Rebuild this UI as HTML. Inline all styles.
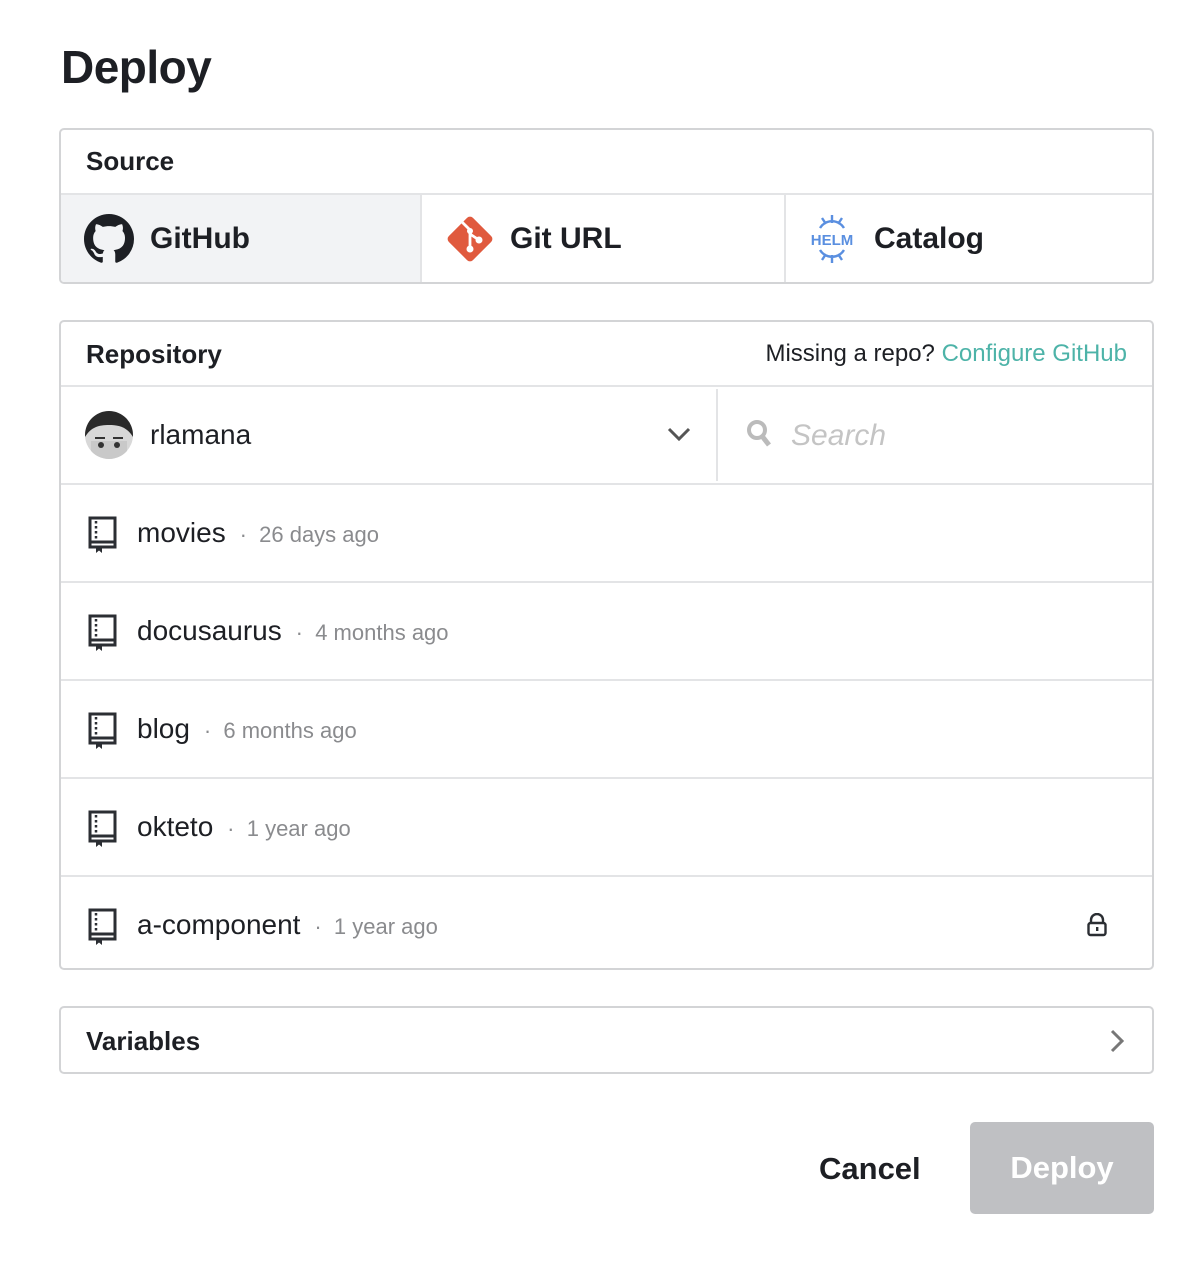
<!DOCTYPE html>
<html><head><meta charset="utf-8"><style>
*{box-sizing:border-box;margin:0;padding:0}
body{width:1204px;height:1268px;background:#fff;font-family:"Liberation Sans",sans-serif;color:#1d1f24;position:relative;overflow:hidden}
.abs{position:absolute}
.box{position:absolute;left:59px;width:1095px;border:2px solid #d3d4d6;border-radius:5px;overflow:hidden}
.h{font-weight:bold;font-size:26px}
.div{position:absolute;background:#e3e4e6}
.row{position:absolute;left:0;width:100%;height:98px;border-top:2px solid #e3e4e6}
.name{position:absolute;left:76px;top:32px;font-size:28px}
.time{font-size:22px;color:#8a8b8e}
.book{position:absolute;left:27px;top:31px}
</style></head><body>
<div class="abs" style="left:61px;top:40px;font-size:46px;font-weight:bold;letter-spacing:-0.5px">Deploy</div>

<div class="box" style="top:128px;height:156px">
  <div class="abs h" style="left:25px;top:16px">Source</div>
  <div class="div" style="left:0;top:63px;width:100%;height:2px"></div>
  <div class="abs" style="left:0;top:65px;width:359px;height:89px;background:#f2f3f5"></div>
  <div class="div" style="left:359px;top:65px;width:2px;height:89px"></div>
  <div class="div" style="left:723px;top:65px;width:2px;height:89px"></div>
  <svg class="abs" style="left:23px;top:84px" width="50" height="50" viewBox="0 0 16 16"><path fill="#1d1f24" d="M8 0C3.58 0 0 3.58 0 8c0 3.54 2.29 6.53 5.47 7.59.4.07.55-.17.55-.38 0-.19-.01-.82-.01-1.49-2.01.37-2.53-.49-2.69-.94-.09-.23-.48-.94-.82-1.13-.28-.15-.68-.52-.01-.53.63-.01 1.08.58 1.23.82.72 1.21 1.87.87 2.33.66.07-.52.28-.87.51-1.07-1.78-.2-3.64-.89-3.64-3.95 0-.87.31-1.59.82-2.15-.08-.2-.36-1.02.08-2.12 0 0 .67-.21 2.2.82.64-.18 1.32-.27 2-.27.68 0 1.36.09 2 .27 1.53-1.04 2.2-.82 2.2-.82.44 1.1.16 1.92.08 2.12.51.56.82 1.27.82 2.15 0 3.07-1.87 3.75-3.65 3.95.29.25.54.73.54 1.48 0 1.07-.01 1.93-.01 2.2 0 .21.15.46.55.38A8.013 8.013 0 0016 8c0-4.42-3.58-8-8-8z"/></svg>
  <div class="abs" style="left:89px;top:92px;font-size:30px;font-weight:bold">GitHub</div>
  <svg class="abs" style="left:383px;top:83px" width="52" height="52" viewBox="0 0 52 52"><rect x="9" y="9" width="34" height="34" rx="4" transform="rotate(45 26 26)" fill="#e05a3e"/><path d="M18 9l8 8v18M26 21l9 6" stroke="#fff" stroke-width="2.8" fill="none"/><circle cx="26" cy="36" r="3.5" fill="#fff"/><circle cx="35" cy="27" r="3.5" fill="#fff"/><circle cx="26" cy="18" r="3" fill="#fff"/></svg>
  <div class="abs" style="left:449px;top:92px;font-size:30px;font-weight:bold">Git URL</div>
  <svg class="abs" style="left:745px;top:84px" width="52" height="50" viewBox="0 0 52 50"><g stroke="#5a8fe0" stroke-width="2.4" fill="none"><path d="M14 14a14 14 0 0 1 24 0M14 36a14 14 0 0 0 24 0M26 1v8M16 4l4 6M36 4l-4 6M26 49v-8M16 46l4-6M36 46l-4-6"/></g><text x="26" y="31" text-anchor="middle" font-family="Liberation Sans" font-weight="bold" font-size="15" fill="#5a8fe0">HELM</text></svg>
  <div class="abs" style="left:813px;top:92px;font-size:30px;font-weight:bold">Catalog</div>
</div>

<div class="box" style="top:320px;height:650px">
  <div class="abs h" style="left:25px;top:17px">Repository</div>
  <div class="abs" style="right:25px;top:18px;font-size:24px">Missing a repo? <span style="color:#4db3a8">Configure GitHub</span></div>
  <div class="div" style="left:0;top:63px;width:100%;height:2px"></div>
  <svg class="abs" style="left:24px;top:89px" width="48" height="48" viewBox="0 0 48 48"><defs><clipPath id="c"><circle cx="24" cy="24" r="24"/></clipPath></defs><g clip-path="url(#c)"><rect width="48" height="48" fill="#d8d8d8"/><path d="M0 0h48v26c-6-10-14-12-24-12S6 16 0 26z" fill="#2a2a2a"/><path d="M6 30h36v18H6z" fill="#c9c9c9"/><circle cx="16" cy="34" r="3" fill="#333"/><circle cx="32" cy="34" r="3" fill="#333"/><path d="M10 27h10M28 27h10" stroke="#333" stroke-width="2"/></g></svg>
  <div class="abs" style="left:89px;top:97px;font-size:28px">rlamana</div>
  <svg class="abs" style="left:606px;top:104px" width="24" height="16" viewBox="0 0 24 16"><path d="M2 3l10 10L22 3" stroke="#555" stroke-width="3" fill="none"/></svg>
  <div class="div" style="left:655px;top:67px;width:2px;height:92px"></div>
  <svg class="abs" style="left:685px;top:97px" width="28" height="30" viewBox="0 0 28 30"><circle cx="11" cy="11" r="8" stroke="#bbb" stroke-width="4" fill="none"/><path d="M16 17l7 9" stroke="#bbb" stroke-width="5"/></svg>
  <div class="abs" style="left:730px;top:97px;font-size:30px;color:#c4c4c4;font-style:italic">Search</div>

  <div class="row" style="top:161px"><svg class="book" width="30" height="38" viewBox="0 0 30 38"><path d="M2 2h25v29H2zM2 26h25" stroke="#2b2e33" stroke-width="3" fill="none"/><path d="M8 5v18" stroke="#2b2e33" stroke-width="2.5" stroke-dasharray="2.5 2.5"/><path d="M8 31v6l3-2.5 3 2.5v-6z" fill="#2b2e33"/></svg><div class="name">movies <span class="time">&nbsp;·&nbsp; 26 days ago</span></div></div>
  <div class="row" style="top:259px"><svg class="book" width="30" height="38" viewBox="0 0 30 38"><path d="M2 2h25v29H2zM2 26h25" stroke="#2b2e33" stroke-width="3" fill="none"/><path d="M8 5v18" stroke="#2b2e33" stroke-width="2.5" stroke-dasharray="2.5 2.5"/><path d="M8 31v6l3-2.5 3 2.5v-6z" fill="#2b2e33"/></svg><div class="name">docusaurus <span class="time">&nbsp;·&nbsp; 4 months ago</span></div></div>
  <div class="row" style="top:357px"><svg class="book" width="30" height="38" viewBox="0 0 30 38"><path d="M2 2h25v29H2zM2 26h25" stroke="#2b2e33" stroke-width="3" fill="none"/><path d="M8 5v18" stroke="#2b2e33" stroke-width="2.5" stroke-dasharray="2.5 2.5"/><path d="M8 31v6l3-2.5 3 2.5v-6z" fill="#2b2e33"/></svg><div class="name">blog <span class="time">&nbsp;·&nbsp; 6 months ago</span></div></div>
  <div class="row" style="top:455px"><svg class="book" width="30" height="38" viewBox="0 0 30 38"><path d="M2 2h25v29H2zM2 26h25" stroke="#2b2e33" stroke-width="3" fill="none"/><path d="M8 5v18" stroke="#2b2e33" stroke-width="2.5" stroke-dasharray="2.5 2.5"/><path d="M8 31v6l3-2.5 3 2.5v-6z" fill="#2b2e33"/></svg><div class="name">okteto <span class="time">&nbsp;·&nbsp; 1 year ago</span></div></div>
  <div class="row" style="top:553px"><svg class="book" width="30" height="38" viewBox="0 0 30 38"><path d="M2 2h25v29H2zM2 26h25" stroke="#2b2e33" stroke-width="3" fill="none"/><path d="M8 5v18" stroke="#2b2e33" stroke-width="2.5" stroke-dasharray="2.5 2.5"/><path d="M8 31v6l3-2.5 3 2.5v-6z" fill="#2b2e33"/></svg><div class="name">a-component <span class="time">&nbsp;·&nbsp; 1 year ago</span></div>
  <svg class="abs" style="left:1025px;top:36px" width="22" height="24" viewBox="0 0 22 24"><path d="M5 10V7a6 6 0 0 1 12 0v3" stroke="#2b2e33" stroke-width="2.4" fill="none"/><rect x="2.5" y="10" width="17" height="12" rx="2" stroke="#2b2e33" stroke-width="2.4" fill="none"/><rect x="10" y="14" width="2.4" height="4" fill="#2b2e33"/></svg></div>
</div>

<div class="box" style="top:1006px;height:68px">
  <div class="abs h" style="left:25px;top:18px">Variables</div>
  <svg class="abs" style="left:1046px;top:20px" width="20" height="26" viewBox="0 0 20 26"><path d="M5 3l10 10L5 23" stroke="#777" stroke-width="3" fill="none"/></svg>
</div>

<div class="abs" style="left:819px;top:1151px;font-size:31px;font-weight:bold">Cancel</div>
<div class="abs" style="left:970px;top:1122px;width:184px;height:92px;background:#bfc0c3;border-radius:5px;color:#fff;font-size:31px;font-weight:bold;text-align:center;line-height:92px">Deploy</div>
</body></html>
